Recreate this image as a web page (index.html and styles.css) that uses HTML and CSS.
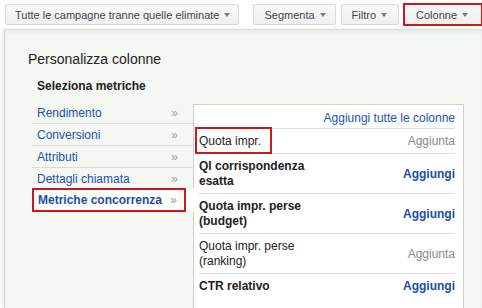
FILE: index.html
```html
<!DOCTYPE html>
<html lang="it">
<head>
<meta charset="utf-8">
<title>Personalizza colonne</title>
<link rel="stylesheet" href="styles.css">
</head>
<body>
<div class="toolbar">
  <button class="btn wide">Tutte le campagne tranne quelle eliminate<span class="caret"></span></button>
  <span class="divider"></span>
  <button class="btn seg">Segmenta<span class="caret"></span></button>
  <button class="btn fil">Filtro<span class="caret"></span></button>
  <button class="btn col">Colonne<span class="caret"></span></button>
</div>
<div class="panel">
  <h1 class="title">Personalizza colonne</h1>
  <div class="body">
    <h2 class="subtitle">Seleziona metriche</h2>
    <div class="cols">
      <ul class="menu">
        <li class="item"><span>Rendimento</span><span class="chev">&raquo;</span></li>
        <li class="item"><span>Conversioni</span><span class="chev">&raquo;</span></li>
        <li class="item"><span>Attributi</span><span class="chev">&raquo;</span></li>
        <li class="item"><span>Dettagli chiamata</span><span class="chev">&raquo;</span></li>
        <li class="item active"><span class="box"><span>Metriche concorrenza</span><span class="chev">&raquo;</span></span></li>
      </ul>
      <div class="list">
        <div class="addall">Aggiungi tutte le colonne</div>
        <div class="row"><span class="label hl">Quota impr.</span><span class="added">Aggiunta</span></div>
        <div class="row"><span class="label strong">QI corrispondenza esatta</span><span class="add">Aggiungi</span></div>
        <div class="row"><span class="label strong">Quota impr. perse (budget)</span><span class="add">Aggiungi</span></div>
        <div class="row"><span class="label">Quota impr. perse (ranking)</span><span class="added">Aggiunta</span></div>
        <div class="row"><span class="label strong">CTR relativo</span><span class="add">Aggiungi</span></div>
      </div>
    </div>
  </div>
</div>
</body>
</html>
```
FILE: styles.css
```css
html, body {
  margin: 0;
  padding: 0;
}
body {
  width: 482px;
  height: 308px;
  overflow: hidden;
  background: #ffffff;
  font-family: "Liberation Sans", Arial, sans-serif;
  color: #222222;
}

/* toolbar */
.toolbar {
  display: flex;
  align-items: center;
  height: 29px;
  padding: 4px 0 4px 5px;
  box-sizing: border-box;
  gap: 5px;
}
.btn {
  display: flex;
  align-items: center;
  height: 21px;
  box-sizing: border-box;
  padding: 0 9px 0 9px;
  font-family: "Liberation Sans", Arial, sans-serif;
  font-size: 11px;
  color: #444444;
  background: linear-gradient(#f8f8f8, #f0f0f0);
  border: 1px solid #d9d9d9;
  border-radius: 2px;
  white-space: nowrap;
}
.btn.wide { padding: 0 8px 0 9px; }
.btn.seg { padding: 0 9px 0 10px; }
.btn.fil { padding: 0 11px 0 10px; }
.btn.col {
  height: 23px;
  padding: 0 13px 0 11px;
  border: 2px solid #cc1a1a;
  border-radius: 0;
  margin-left: -1px;
}
.caret {
  display: inline-block;
  width: 0;
  height: 0;
  margin-left: 5px;
  margin-top: 1px;
  border-top: 4px solid #7a7a7a;
  border-left: 3px solid transparent;
  border-right: 3px solid transparent;
}
.divider {
  width: 1px;
  height: 21px;
  background: #e4e4e4;
  margin: 0 2px;
}

/* panel */
.panel {
  margin-left: 4px;
  height: 279px;
  box-sizing: border-box;
  background: #f4f7f2;
  border-left: 1px solid #d6d8d4;
  border-top: 1px solid #dcdedb;
  box-shadow: -2px 0 3px rgba(0, 0, 0, 0.08), inset 0 2px 3px rgba(0, 0, 0, 0.05);
  padding: 21px 0 0 23px;
  overflow: hidden;
}
.title {
  margin: 0 0 11px 0;
  font-size: 14px;
  font-weight: normal;
  line-height: 17px;
  color: #222222;
}
.body {
  margin-left: 4px;
}
.subtitle {
  margin: 0 0 8px 0;
  padding-left: 5px;
  font-size: 12px;
  font-weight: bold;
  line-height: 15px;
  color: #222222;
}
.cols {
  display: flex;
  align-items: flex-start;
}

/* left menu */
.menu {
  list-style: none;
  margin: 0;
  padding: 0;
  width: 161px;
  flex: none;
}
.item {
  display: flex;
  justify-content: space-between;
  align-items: center;
  padding: 4px 15px 2px 5px;
  line-height: 15px;
  font-size: 12px;
  color: #2353aa;
  border-bottom: 1px solid #dcdddb;
}
.chev {
  font-size: 12px;
  color: #a0a0a0;
}
.item.active {
  position: relative;
  z-index: 1;
  margin-top: -2px;
  margin-right: -1px;
  padding: 0;
  border-bottom: none;
  background: #ffffff;
  font-weight: bold;
  color: #1f4ea6;
}
.box {
  display: flex;
  justify-content: space-between;
  align-items: center;
  width: 154px;
  box-sizing: border-box;
  border: 2px solid #cc1a1a;
  padding: 3px 7px 2px 4px;
}
.box .chev {
  font-weight: normal;
}

/* right list */
.list {
  flex: none;
  width: 271px;
  box-sizing: border-box;
  margin-top: 2px;
  height: 220px;
  background: #ffffff;
  border: 1px solid #cfcfcf;
  border-bottom: none;
  padding: 0 8px 0 5px;
  font-size: 12px;
}
.addall {
  text-align: right;
  padding: 6px 0 2px;
  line-height: 15px;
  color: #2353aa;
  border-bottom: 1px solid #dddddd;
}
.row {
  display: flex;
  justify-content: space-between;
  align-items: center;
  padding: 5px 0 4px;
  line-height: 15px;
  border-bottom: 1px solid #dddddd;
}
.row:last-child {
  border-bottom: none;
}
.label {
  width: 130px;
  color: #222222;
}
.label.strong {
  font-weight: bold;
}
.label.hl {
  flex: none;
  width: 77px;
  box-sizing: border-box;
  border: 2px solid #cc1a1a;
  padding: 5px 0 3px 2px;
  margin: -7px 0 -5px -4px;
}
.added {
  color: #8a8a8a;
}
.add {
  font-weight: bold;
  color: #1c4cab;
}
```
